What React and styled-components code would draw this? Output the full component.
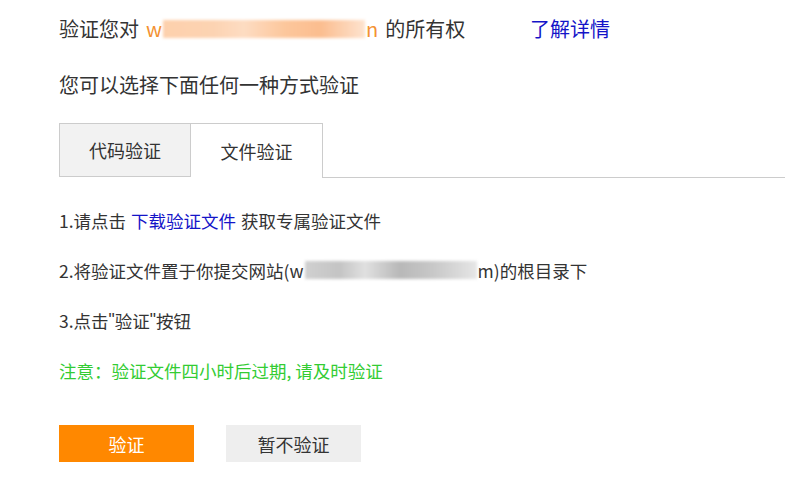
import React, { useState } from 'react';
import styled, { createGlobalStyle } from 'styled-components';

const GlobalStyle = createGlobalStyle`
  html, body {
    margin: 0;
    padding: 0;
    background: #fff;
  }
  body {
    font-family: "Noto Sans CJK SC", "Liberation Sans", sans-serif;
    color: #333;
  }
`;

const Page = styled.div`
  width: 785px;
  padding-left: 59px;
  box-sizing: border-box;
`;

const TitleRow = styled.div`
  display: flex;
  align-items: center;
  height: 57px;
  font-size: 20px;
`;

const Domain = styled.span`
  color: #f39232;
  margin: 0 7px 0 7px;
  display: inline-flex;
  align-items: center;
`;

const Blur = styled.span`
  display: inline-block;
  width: ${props => props.w}px;
  height: 18px;
  margin: 0 1px;
  background: ${props => props.tone === 'grey'
    ? 'linear-gradient(90deg, #d0d0d0 0%, #c4c4c4 20%, #e0e0e0 35%, #b8b8b8 55%, #c8c8c8 75%, #e6e6e6 100%)'
    : 'linear-gradient(90deg, #fdd0ac 0%, #fcd3b2 25%, #fddcc2 40%, #fcc79c 60%, #fbbd8f 78%, #fde3cf 100%)'};
  filter: blur(1.5px);
`;

const MoreLink = styled.a`
  margin-left: auto;
  margin-right: 175px;
  color: #1414c8;
  text-decoration: none;
  cursor: pointer;
`;

const SubTitle = styled.div`
  height: 57px;
  line-height: 56px;
  font-size: 20px;
`;

const TabBar = styled.div`
  display: flex;
  margin-top: 9px;
  height: 55px;
`;

const Tab = styled.div`
  width: 132px;
  height: ${props => (props.active ? 55 : 54)}px;
  box-sizing: border-box;
  display: flex;
  align-items: center;
  justify-content: center;
  font-size: 18px;
  cursor: pointer;
  border: 1px solid #cccccc;
  border-left-width: ${props => (props.active ? 0 : 1)}px;
  border-bottom-width: ${props => (props.active ? 0 : 1)}px;
  background: ${props => (props.active ? '#fff' : '#f2f2f2')};
`;

const TabFill = styled.div`
  flex: 1;
  border-bottom: 1px solid #cccccc;
`;

const Steps = styled.div`
  margin-top: 17px;
  display: flex;
  flex-direction: column;
`;

const Step = styled.div`
  display: flex;
  align-items: center;
  height: 50px;
  font-size: 17.5px;
  color: ${props => (props.note ? '#33cc33' : '#333')};
`;

const Quote = styled.span`
  font-family: "Liberation Sans", sans-serif;
`;

const InlineLink = styled.a`
  color: #1414c8;
  margin: 0 5px;
  text-decoration: none;
  cursor: pointer;
`;

const Actions = styled.div`
  display: flex;
  gap: 32px;
  margin-top: 30px;
`;

const Button = styled.button`
  width: 135px;
  height: 37px;
  border: none;
  font-family: inherit;
  font-size: 18px;
  cursor: pointer;
  background: ${props => (props.primary ? '#ff8800' : '#eeeeee')};
  color: ${props => (props.primary ? '#fff' : '#333')};
`;

export default function App() {
  const [tab, setTab] = useState('file');

  return (
    <Page>
      <GlobalStyle />
      <TitleRow>
        验证您对
        <Domain>
          w<Blur w={202} />n
        </Domain>
        的所有权
        <MoreLink>了解详情</MoreLink>
      </TitleRow>
      <SubTitle>您可以选择下面任何一种方式验证</SubTitle>
      <TabBar>
        <Tab active={tab === 'code'} onClick={() => setTab('code')}>代码验证</Tab>
        <Tab active={tab === 'file'} onClick={() => setTab('file')}>文件验证</Tab>
        <TabFill />
      </TabBar>
      <Steps>
        <Step>
          1.请点击<InlineLink>下载验证文件</InlineLink>获取专属验证文件
        </Step>
        <Step>
          2.将验证文件置于你提交网站(w<Blur w={172} tone="grey" />m)的根目录下
        </Step>
        <Step>3.点击<Quote>"</Quote>验证<Quote>"</Quote>按钮</Step>
        <Step note>注意：验证文件四小时后过期, 请及时验证</Step>
      </Steps>
      <Actions>
        <Button primary>验证</Button>
        <Button>暂不验证</Button>
      </Actions>
    </Page>
  );
}
